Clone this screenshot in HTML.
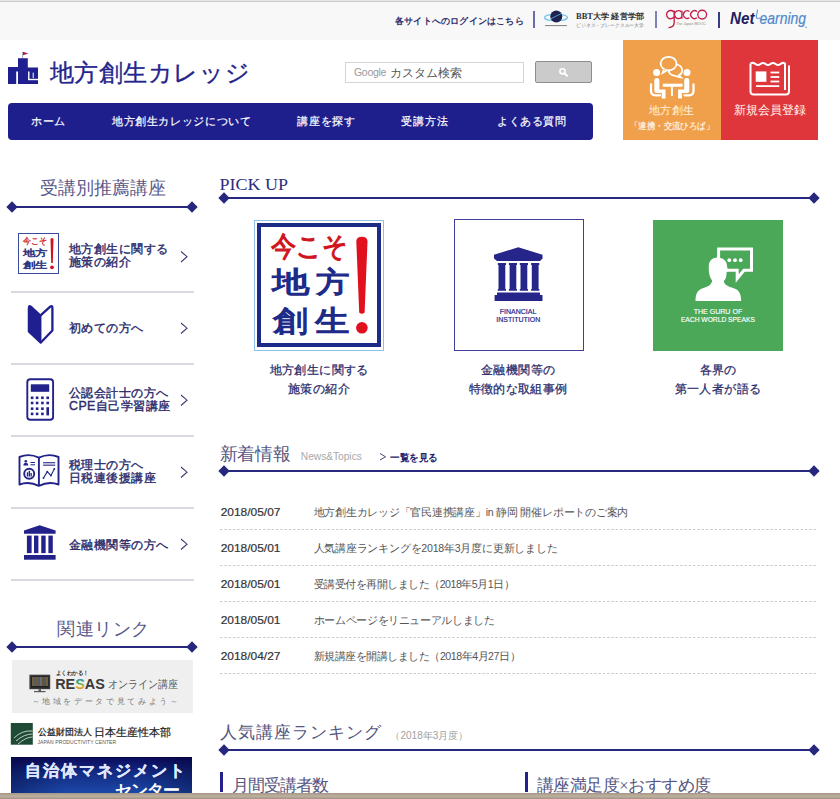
<!DOCTYPE html>
<html lang="ja"><head><meta charset="utf-8">
<style>
*{margin:0;padding:0;box-sizing:border-box}
html,body{width:840px;height:799px;overflow:hidden;background:#fff;font-family:"Liberation Sans",sans-serif;color:#1f1f6e}
.abs{position:absolute;white-space:nowrap}
svg{position:absolute;overflow:visible}
#top{position:absolute;left:0;top:0;width:840px;height:40px;background:#f8f8f8;border-top:1px solid #e6e6e6}
#top:before{content:"";position:absolute;left:0;top:0;width:840px;height:1px;background:#cbcbcb}
.login{position:absolute;left:395px;top:14px;font-size:9px;font-weight:bold;color:#2e2e6e;white-space:nowrap;letter-spacing:0.2px}
.vsep{position:absolute;width:2px;background:#6c6cab}
#nav{position:absolute;left:8px;top:102.8px;width:585.3px;height:37.3px;background:#1e1e8c;border-radius:4px}
#nav span{position:absolute;top:114px;color:#fff;font-size:11.4px;white-space:nowrap;-webkit-text-stroke:0.25px #fff}
.search{position:absolute;left:345px;top:62px;width:179px;height:21px;border:1px solid #d5d5d5;background:#fff}
.sbtn{position:absolute;left:535px;top:61px;width:57px;height:22px;border:1px solid #8e8e8e;border-radius:2px;background:#cbcbcb}
#orange{position:absolute;left:623px;top:40px;width:98px;height:100px;background:#f0a04a}
#red{position:absolute;left:721px;top:40px;width:97px;height:100px;background:#df363c}
.hd{position:absolute;font-family:"Liberation Serif",serif;color:#58588a;white-space:nowrap}
.dline{position:absolute;height:2px;background:#27277d}
.dline:before,.dline:after{content:"";position:absolute;top:-3px;width:8px;height:8px;background:#27277d;transform:rotate(45deg)}
.dline:before{left:-4px}.dline:after{right:-4px}
.sep{position:absolute;left:11px;width:183px;height:1.6px;background:#d9d9df}
.st{position:absolute;left:69px;font-size:12.4px;line-height:12.6px;letter-spacing:0.45px;color:#2c2c6c;white-space:nowrap;-webkit-text-stroke:0.4px #2c2c6c}
.pcap{position:absolute;top:360.5px;width:200px;text-align:center;font-size:12px;letter-spacing:0.35px;text-indent:0.35px;line-height:19px;color:#2a2a6a;-webkit-text-stroke:0.25px #2a2a6a}
.nd{position:absolute;left:221px;font-size:11px;font-weight:bold;color:#333}
.nx{position:absolute;left:313px;font-size:10.5px;color:#444;white-space:nowrap}
.ndash{position:absolute;left:220px;width:597px;height:0;border-top:1px dashed #cfcfcf}
</style></head><body>
<div id="top">
  <div class="login">各サイトへのログインはこちら</div>
</div>
<div class="vsep" style="left:533px;top:11px;height:17px"></div>
<div class="vsep" style="left:655px;top:11px;height:17px;background:#8080bb"></div>
<div class="vsep" style="left:718px;top:12px;height:16px;background:#3a3a80"></div>

<!-- BBT logo -->
<svg style="left:0;top:0" width="840" height="40">
  <ellipse cx="556" cy="17.5" rx="11.5" ry="3.2" fill="none" stroke="#74c4ec" stroke-width="1.3"/>
  <circle cx="556.3" cy="16.6" r="6" fill="#1b2450"/>
  <path d="M550.5 19 Q556 16 561.5 13.5" stroke="#74c4ec" stroke-width="0.7" fill="none"/>
  <rect x="545" y="25" width="22" height="1.1" fill="#8a8a8a"/>
  <text x="576" y="19" font-family="Liberation Serif" font-weight="bold" font-size="8.4" fill="#333" textLength="68" lengthAdjust="spacingAndGlyphs">BBT大学 経営学部</text>
  <text x="576" y="27" font-family="Liberation Sans" font-size="4.6" fill="#777" textLength="68" lengthAdjust="spacingAndGlyphs">ビジネス・ブレークスルー大学</text>
  <g fill="none" stroke="#c41e48" stroke-width="1.35">
    <path d="M674 12.2 A4.1 4.1 0 1 0 674 17"/>
    <path d="M674.2 10.6 V22.5 Q674.2 27.4 668.5 27.6"/>
    <path d="M681.7 12.2 A4 4 0 1 0 681.7 17"/>
    <path d="M681.9 10.7 V18.8"/>
    <path d="M689.4 11.5 A3.8 3.8 0 1 0 689.4 17.7"/>
    <path d="M697 11.5 A3.9 3.9 0 1 0 697 17.7"/>
    <circle cx="702.2" cy="14.6" r="4.4"/>
  </g>
  <text x="676" y="24.8" font-family="Liberation Sans" font-size="3.6" fill="#888" textLength="30" lengthAdjust="spacingAndGlyphs">The Japan MOOC</text>
  <text x="730" y="24.3" font-family="Liberation Sans" font-weight="bold" font-style="italic" font-size="16.2" fill="#1e2162" textLength="24.5" lengthAdjust="spacingAndGlyphs">Net</text>
  <path d="M757.5 9.5 L756.2 18.2 H760.5" fill="none" stroke="#5a8fd0" stroke-width="1"/>
  <text x="759.5" y="24.3" font-family="Liberation Sans" font-style="italic" font-size="16.5" fill="#4f88cc" stroke="#4f88cc" stroke-width="0.2" textLength="46.5" lengthAdjust="spacingAndGlyphs">earning</text>
  <circle cx="806" cy="27.2" r="0.7" fill="#4f88cc"/>
</svg>

<!-- logo -->
<svg style="left:0;top:0" width="300" height="100">
  <rect x="22.2" y="51.8" width="0.9" height="6.6" fill="#9a9ab8"/>
  <path d="M23 51.8 L28.3 53.5 L23 55.2 Z" fill="#a82044"/>
  <path d="M8 67 H18 V58.2 H27.8 V67.5 H38 V84 H18 V71.5 H16.2 V84 H8 Z" fill="#1f1f8f"/>
  <rect x="28.1" y="71.5" width="1.4" height="8.5" fill="#fff"/>
  <rect x="28.1" y="78.8" width="9.9" height="1.4" fill="#fff"/>
  <rect x="32.7" y="72.6" width="1" height="5.4" fill="#fff"/>
  <text x="49.5" y="81.3" style="font-family:'Liberation Sans',sans-serif" font-size="23.5" fill="#24248c" stroke="#24248c" stroke-width="0.35" textLength="200" lengthAdjust="spacing">地方創生カレッジ</text>
</svg>

<div class="search"></div>
<div class="abs" style="left:354px;top:66px;font-size:10.5px;color:#9a9a9a;letter-spacing:-0.3px">Google</div>
<div class="abs" style="left:390px;top:65.5px;font-size:11.6px;color:#555">カスタム検索</div>
<div class="sbtn"></div>
<svg style="left:0;top:0" width="840" height="100">
  <circle cx="562.5" cy="71.3" r="2.6" fill="none" stroke="#fff" stroke-width="1.6"/>
  <path d="M564.3 73.1 L567 75.8" stroke="#fff" stroke-width="2" stroke-linecap="round"/>
</svg>

<div id="orange"></div>
<div id="red"></div>
<!-- orange icon -->
<svg style="left:0;top:0" width="840" height="140">
  <g fill="none" stroke="#fff" stroke-width="1.75">
    <path d="M676 64.5 C683 65 684 73 679 75 L681 77.5 L675 75.8 C670 75.5 668 72 669.5 70" />
    <ellipse cx="668.6" cy="63.6" rx="8" ry="6.8" fill="#f0a04a"/>
    <path d="M664 69.6 L662.5 73 L667 70.6" fill="#f0a04a"/>
  </g>
  <g fill="#fff">
    <circle cx="656.6" cy="72.5" r="3.5"/>
    <circle cx="687" cy="72.5" r="3.5"/>
    <path d="M654.3 80 Q654.3 78 656.8 78 Q659.4 78 659.4 80 V89.6 H665.5 V98.4 H661.7 V93 H656.8 Q654.3 93 654.3 90.5 Z"/>
    <path d="M689.3 80 Q689.3 78 686.8 78 Q684.2 78 684.2 80 V89.6 H678.1 V98.4 H681.9 V93 H686.8 Q689.3 93 689.3 90.5 Z"/>
    <rect x="662.8" y="83.7" width="19.8" height="3.1"/>
    <rect x="671" y="86.5" width="1.9" height="9.5"/>
  </g>
  <g fill="none" stroke="#fff" stroke-width="2.3" stroke-linecap="round">
    <path d="M651 84.5 V91 Q651 95.3 655.5 95.3 H660"/>
    <path d="M693.5 84.5 V91 Q693.5 95.3 689 95.3 H684.5"/>
  </g>
</svg>
<div class="abs" style="left:648.5px;top:103px;font-size:11.3px;letter-spacing:0.5px;color:#fff4e6">地方創生</div>
<svg style="left:0;top:0" width="840" height="140"><text x="630" y="129.2" style="font-family:'Liberation Sans',sans-serif" font-size="8.8" fill="#fff4e6" stroke="#fff4e6" stroke-width="0.2" textLength="84" lengthAdjust="spacingAndGlyphs">「連携・交流ひろば」</text></svg>
<!-- red icon -->
<svg style="left:0;top:0" width="840" height="140">
  <g fill="none" stroke="#fff" stroke-width="2" stroke-linejoin="round">
    <path d="M750.5 63.5 Q753 62 755.5 64 Q758 66 760.5 64 Q763 62 765.5 64 Q768 66 770.5 64 Q773 62 775.5 64 Q778 66 780.5 64 Q783 62 785 63.5 V90"/>
    <path d="M750.5 63.5 V91.5 Q750.5 94.6 753.6 94.6 H786 Q789 94.6 789 91.5 V65.5"/>
  </g>
  <g fill="#fff">
    <rect x="755.7" y="71.4" width="10.7" height="10.4"/>
    <rect x="770.5" y="71.6" width="8.8" height="1.8"/>
    <rect x="770.5" y="76.1" width="8.8" height="1.8"/>
    <rect x="770.5" y="80.6" width="8.8" height="1.8"/>
    <rect x="756" y="85.2" width="23.3" height="1.8"/>
  </g>
</svg>
<div class="abs" style="left:734px;top:103px;font-size:11.7px;color:#fff4f0">新規会員登録</div>

<div id="nav"></div>
<span class="abs" style="left:31px;top:114px;color:#fff;font-size:11.2px;letter-spacing:0.6px;-webkit-text-stroke:0.2px #fff">ホーム</span>
<span class="abs" style="left:112px;top:114px;color:#fff;font-size:11.4px;letter-spacing:0.62px;-webkit-text-stroke:0.2px #fff">地方創生カレッジについて</span>
<span class="abs" style="left:297px;top:114px;color:#fff;font-size:11.4px;letter-spacing:0.8px;-webkit-text-stroke:0.2px #fff">講座を探す</span>
<span class="abs" style="left:401px;top:114px;color:#fff;font-size:11.4px;letter-spacing:0.95px;-webkit-text-stroke:0.2px #fff">受講方法</span>
<span class="abs" style="left:497px;top:114px;color:#fff;font-size:11.4px;letter-spacing:0.56px;-webkit-text-stroke:0.2px #fff">よくある質問</span>

<!-- SIDEBAR_START -->
<div class="hd" style="left:40px;top:176px;font-size:18px">受講別推薦講座</div>
<div class="dline" style="left:12px;top:205.5px;width:180px"></div>

<!-- item1 -->
<div class="abs" style="left:18px;top:232.5px;width:40.5px;height:41.5px;border:1.6px solid #3a4a9c;background:#fff"></div>
<svg style="left:0;top:0" width="210" height="799">
  <g style="font-family:'Liberation Sans',sans-serif">
  <text x="23.3" y="244.3" font-size="8.6" fill="#d0282c" stroke="#d0282c" stroke-width="0.35" textLength="23.8" lengthAdjust="spacingAndGlyphs">今こそ</text>
  <text x="22.8" y="255.8" font-size="9.2" fill="#28307e" stroke="#28307e" stroke-width="0.45" textLength="24.8" lengthAdjust="spacingAndGlyphs">地方</text>
  <text x="22.8" y="267.5" font-size="9.2" fill="#28307e" stroke="#28307e" stroke-width="0.45" textLength="24.8" lengthAdjust="spacingAndGlyphs">創生</text>
  </g>
</svg>
<svg style="left:0;top:0" width="210" height="799">
  <path d="M50.5 239 Q52 237.2 53.5 239 L52.8 263 H51.2 Z" fill="#d0141c"/>
  <circle cx="52" cy="267.3" r="1.9" fill="#d0141c"/>
</svg>
<div class="st" style="top:243px">地方創生に関する<br>施策の紹介</div>
<div class="sep" style="top:291px"></div>

<!-- item2 -->
<svg style="left:0;top:0" width="210" height="799">
  <path d="M28.6 308 Q28.6 304.6 31.2 306.6 L40.6 315.3 V343 L28.6 331.6 Z" fill="#1f1f8f" stroke="#1f1f8f" stroke-width="1.7" stroke-linejoin="round"/>
  <path d="M40.6 315.3 L50.2 306.7 Q52.4 305 52.4 308 V330.5 L40.6 342.8" fill="none" stroke="#1f1f8f" stroke-width="2.3" stroke-linejoin="round"/>
</svg>
<div class="st" style="top:321.5px">初めての方へ</div>
<div class="sep" style="top:363px"></div>

<!-- item3 calculator -->
<svg style="left:0;top:0" width="210" height="799">
  <rect x="27.3" y="379.3" width="25.8" height="40.4" rx="3" fill="none" stroke="#22228a" stroke-width="1.9"/>
  <rect x="30.8" y="384.3" width="18.4" height="7.5" fill="#22228a"/>
  <g fill="#22228a">
    <rect x="30.8" y="396.5" width="2.6" height="2.6"/><rect x="35.8" y="396.5" width="2.6" height="2.6"/><rect x="41.1" y="396.5" width="2.6" height="2.6"/><rect x="46.4" y="396.5" width="2.6" height="2.6"/>
    <rect x="30.8" y="401.7" width="2.6" height="2.6"/><rect x="35.8" y="401.7" width="2.6" height="2.6"/><rect x="41.1" y="401.7" width="2.6" height="2.6"/><rect x="46.4" y="401.7" width="2.6" height="2.6"/>
    <rect x="30.8" y="407.4" width="2.6" height="2.6"/><rect x="35.8" y="407.4" width="2.6" height="2.6"/><rect x="41.1" y="407.4" width="2.6" height="2.6"/>
    <rect x="30.8" y="412.6" width="2.6" height="2.6"/><rect x="35.8" y="412.6" width="2.6" height="2.6"/><rect x="41.1" y="412.6" width="2.6" height="2.6"/>
    <rect x="46.4" y="407.2" width="2.6" height="8.2"/>
  </g>
</svg>
<div class="st" style="top:387px">公認会計士の方へ<br>CPE自己学習講座</div>
<div class="sep" style="top:435px"></div>

<!-- item4 book -->
<svg style="left:0;top:0" width="210" height="799">
  <g fill="none" stroke="#22228a" stroke-width="1.9" stroke-linejoin="round">
    <path d="M38.9 457.6 Q29 453 19.5 457 V484.5 Q29 481 38.9 485.8 Q49 481 58.5 484.5 V457 Q49 453 38.9 457.6 Z"/>
    <path d="M38.9 457.6 V485.8"/>
    <circle cx="29.2" cy="473.8" r="5"/>
    <path d="M43.5 478 L47.3 471.6 L50.9 475.6 L54.3 469" stroke-width="1.1"/>
  </g>
  <g fill="#22228a">
    <circle cx="25.8" cy="461.3" r="1.3"/>
    <path d="M23.4 465.5 Q23.4 462.8 25.8 462.8 Q28.2 462.8 28.2 465.5 Z"/>
    <rect x="30.5" y="462" width="4.5" height="1"/><rect x="30.5" y="464.3" width="4.5" height="1"/>
    <rect x="43.1" y="462.2" width="12.1" height="1.1"/><rect x="43.1" y="464.6" width="12.1" height="1.1"/>
    <rect x="26.8" y="472.3" width="1.3" height="4.2"/><rect x="28.6" y="470.8" width="1.5" height="5.7"/><rect x="30.5" y="473" width="1.3" height="3.5"/>
    <circle cx="43.5" cy="478" r="0.9"/><circle cx="47.3" cy="471.6" r="0.9"/><circle cx="50.9" cy="475.6" r="0.9"/><circle cx="54.3" cy="469" r="0.9"/>
  </g>
</svg>
<div class="st" style="top:459px">税理士の方へ<br>日税連後援講座</div>
<div class="sep" style="top:507px"></div>

<!-- item5 bank -->
<svg style="left:0;top:0" width="210" height="799">
  <g fill="#22228a">
    <path d="M39.7 525.3 L55.6 530.6 V533.8 H24 V530.6 Z"/>
    <rect x="26.9" y="535.6" width="4.7" height="17.5"/>
    <rect x="34" y="535.6" width="4.4" height="17.5"/>
    <rect x="41.25" y="535.6" width="4.4" height="17.5"/>
    <rect x="48.4" y="535.6" width="4.4" height="17.5"/>
    <rect x="24" y="555" width="31.6" height="4.7"/>
  </g>
</svg>
<div class="st" style="top:539px">金融機関等の方へ</div>
<div class="sep" style="top:579px"></div>

<!-- arrows -->
<svg style="left:0;top:0" width="210" height="799">
  <g fill="none" stroke="#3b3b78" stroke-width="1.1">
    <path d="M181 251.5 L187 256.7 L181 262"/>
    <path d="M181 323 L187 328.2 L181 333.5"/>
    <path d="M181 395 L187 400.2 L181 405.5"/>
    <path d="M181 467 L187 472.2 L181 477.5"/>
    <path d="M181 539 L187 544.2 L181 549.5"/>
  </g>
</svg>

<div class="hd" style="left:57px;top:617px;font-size:18px;letter-spacing:0.5px">関連リンク</div>
<div class="dline" style="left:12px;top:646px;width:180px"></div>

<!-- RESAS -->
<div class="abs" style="left:11.5px;top:660px;width:181.5px;height:53px;background:#efefef"></div>
<svg style="left:0;top:0" width="210" height="799">
  <rect x="29.4" y="674.7" width="20.8" height="14.5" fill="#3a3a3a"/>
  <rect x="31" y="676.3" width="17.6" height="11.3" fill="#222"/>
  <g stroke-width="0.8">
    <path d="M33 677 V686" stroke="#e6c36a"/><path d="M35 677 V686" stroke="#b0b0b0"/><path d="M37 677 V686" stroke="#dcb860"/><path d="M39 677 V686" stroke="#9ad"/>
    <path d="M41 677 V686" stroke="#ddd"/><path d="M43 677 V686" stroke="#c9a050"/><path d="M45 677 V686" stroke="#aaa"/><path d="M47 677 V686" stroke="#e0c070"/>
  </g>
  <rect x="38.5" y="689.2" width="2.5" height="2" fill="#555"/>
  <rect x="34" y="691" width="11.5" height="1.2" fill="#555"/>
</svg>
<svg style="left:0;top:0" width="210" height="799">
  <defs><linearGradient id="sg" x1="0" y1="0" x2="0" y2="1"><stop offset="0" stop-color="#2f7fd0"/><stop offset="0.45" stop-color="#3aa860"/><stop offset="0.7" stop-color="#e8b830"/><stop offset="1" stop-color="#d83a3a"/></linearGradient></defs>
  <g style="font-family:'Liberation Sans',sans-serif">
    <text x="55.6" y="674.5" font-size="6.2" font-weight="bold" fill="#333" textLength="32.9" lengthAdjust="spacingAndGlyphs">よくわかる！</text>
    <text x="55.2" y="688.6" font-size="14.5" font-weight="bold" fill="#3a3a3a" textLength="49.6" lengthAdjust="spacingAndGlyphs">RE<tspan fill="url(#sg)">S</tspan>AS</text>
    <text x="107.5" y="688.2" font-size="11" fill="#5a5a5a" textLength="70.5" lengthAdjust="spacingAndGlyphs">オンライン講座</text>
    <text x="31.5" y="703.8" font-size="7.8" fill="#7a7a7a" textLength="146.5" lengthAdjust="spacing">～地域をデータで見てみよう～</text>
  </g>
</svg>

<!-- JPC -->
<svg style="left:0;top:0" width="210" height="799">
  <rect x="10.8" y="723" width="22" height="21.7" fill="#1f4a36"/>
  <g fill="none" stroke="#e8efe8" stroke-width="0.8">
    <path d="M14 738 Q22 730 32.5 731"/>
    <path d="M16 741 Q24 734 32.5 734"/>
    <path d="M18 744 Q26 737 32.5 737"/>
  </g>
</svg>
<div class="abs" style="left:37.5px;top:727px;font-size:8.8px;font-weight:bold;color:#333">公益財団法人</div>
<div class="abs" style="left:94px;top:725px;font-size:11px;color:#222;-webkit-text-stroke:0.2px #222">日本生産性本部</div>
<div class="abs" style="left:37.5px;top:739px;font-size:5px;color:#555;letter-spacing:0.1px">JAPAN PRODUCTIVITY CENTER</div>

<!-- 自治体マネジメントセンター -->
<div class="abs" style="left:10.8px;top:756.8px;width:181.7px;height:36px;background:linear-gradient(90deg,rgba(0,0,40,0.35) 0%,rgba(0,0,40,0) 30%,rgba(0,0,40,0) 70%,rgba(0,0,40,0.35) 100%),linear-gradient(180deg,#0c0c5e 0%,#122a82 40%,#1c48a8 100%);border-top:1px solid #050540"></div>
<svg style="left:0;top:0" width="210" height="799"><text x="25" y="776.3" style="font-family:'Liberation Sans',sans-serif" font-size="16" font-weight="bold" fill="#fff" stroke="#dde4ff" stroke-width="0.3" textLength="160" lengthAdjust="spacing">自治体マネジメント</text></svg>
<svg style="left:0;top:0" width="210" height="799"><text x="114.8" y="796" style="font-family:'Liberation Sans',sans-serif" font-size="16.5" font-weight="bold" fill="#fff" textLength="65.5" lengthAdjust="spacing">センター</text></svg>

<!-- SIDEBAR_END -->

<!-- MAIN_START -->
<svg style="left:0;top:0" width="840" height="799">
  <g style="font-family:'Liberation Serif',serif">
    <text x="219.5" y="189.5" font-size="16.5" fill="#2e2e7e" textLength="68.5" lengthAdjust="spacingAndGlyphs">PICK UP</text>
  </g>
</svg>
<div class="dline" style="left:224px;top:197px;width:590px"></div>

<!-- pick 1 -->
<div class="abs" style="left:254.3px;top:220px;width:129.3px;height:131px;border:1px solid #8fc0e8;background:#fff"></div>
<div class="abs" style="left:257px;top:223.2px;width:124px;height:124.3px;border:4.3px solid #1c2a88"></div>
<svg style="left:0;top:0" width="840" height="799">
  <g style="font-family:'Liberation Sans',sans-serif">
    <text x="271" y="256" font-size="27.5" fill="#d0141c" stroke="#d0141c" stroke-width="1.1" textLength="77" lengthAdjust="spacingAndGlyphs">今こそ</text>
    <text x="272" y="292" font-size="28.5" fill="#1c2a88" stroke="#1c2a88" stroke-width="1.2" textLength="37.5" lengthAdjust="spacingAndGlyphs">地</text>
    <text x="315.5" y="292" font-size="28.5" fill="#1c2a88" stroke="#1c2a88" stroke-width="1.2" textLength="33.5" lengthAdjust="spacingAndGlyphs">方</text>
    <text x="272.5" y="331" font-size="29" fill="#1c2a88" stroke="#1c2a88" stroke-width="1.2" textLength="35" lengthAdjust="spacingAndGlyphs">創</text>
    <text x="314.5" y="331" font-size="29" fill="#1c2a88" stroke="#1c2a88" stroke-width="1.2" textLength="34.5" lengthAdjust="spacingAndGlyphs">生</text>
  </g>
  <path d="M356.3 241.5 Q356.3 236.7 361.9 236.7 Q367.5 236.7 367.5 241.5 L364.6 312.5 Q361.9 315 359.2 312.5 Z" fill="#e0101c"/>
  <circle cx="361.9" cy="327.8" r="5.8" fill="#e0101c"/>
</svg>

<!-- pick 2 -->
<div class="abs" style="left:453.7px;top:219.4px;width:130px;height:132px;border:1.5px solid #40409a;background:#fff"></div>
<svg style="left:0;top:0" width="840" height="799">
  <g fill="#26268a">
    <path d="M518.3 247.3 L542.5 254.7 V258.5 L540 260.9 H497 L494 258.5 V254.7 Z"/>
    <path d="M497.8 263.1 H506 V265 H505.3 V289 H506 V290.7 H497.8 V289 H498.5 V265 H497.8 Z"/>
    <path d="M508.9 263.1 H517 V265 H516.3 V289 H517 V290.7 H508.9 V289 H509.6 V265 H508.9 Z"/>
    <path d="M519.8 263.1 H528 V265 H527.3 V289 H528 V290.7 H519.8 V289 H520.5 V265 H519.8 Z"/>
    <path d="M531.1 263.1 H539.3 V265 H538.6 V289 H539.3 V290.7 H531.1 V289 H531.8 V265 H531.1 Z"/>
    <path d="M497 292.4 H540 V295 H542.5 V300.9 H494.6 V295 H497 Z"/>
  </g>
  <g style="font-family:'Liberation Sans',sans-serif" fill="#2a2a8a" stroke="#2a2a8a" stroke-width="0.2">
    <text x="499.7" y="313.8" font-size="6.9" textLength="36.6" lengthAdjust="spacingAndGlyphs">FINANCIAL</text>
    <text x="496.3" y="321.7" font-size="6.9" textLength="43.9" lengthAdjust="spacingAndGlyphs">INSTITUTION</text>
  </g>
</svg>

<!-- pick 3 -->
<div class="abs" style="left:653px;top:220px;width:130px;height:131px;background:#4aa858"></div>
<svg style="left:0;top:0" width="840" height="799">
  <path d="M718.6 249 H751.5 V270.3 H744 L737.2 278.5 V270.3 H718.6 Z" fill="#4aa858" stroke="#fff" stroke-width="3" stroke-linejoin="miter"/>
  <g fill="#fff"><circle cx="729.3" cy="260.2" r="1.9"/><circle cx="735" cy="260.2" r="1.9"/><circle cx="740.7" cy="260.2" r="1.9"/></g>
  <path fill="#fff" d="M695.5 301 C695.5 292.5 698.5 289.5 704 287.8 C709 286.3 711.5 284.5 712.2 280.5 C709.5 277.5 708.6 272 708.8 266 C709 260.5 712.5 257.5 717.5 257.5 C723 257.5 727 261 727 266 L728 271 L726.6 272.3 C726.6 277 725.5 280 723.8 281 C724.3 284.3 727 286.3 732.5 287.8 C738 289.3 741.2 292.5 741.2 301 Z"/>
  <g style="font-family:'Liberation Sans',sans-serif" fill="#fff" stroke="#fff" stroke-width="0.15">
    <text x="693.7" y="314.2" font-size="6.9" textLength="48.5" lengthAdjust="spacingAndGlyphs">THE GURU OF</text>
    <text x="680.9" y="322.2" font-size="6.9" textLength="74" lengthAdjust="spacingAndGlyphs">EACH WORLD SPEAKS</text>
  </g>
</svg>

<div class="pcap" style="left:219px">地方創生に関する<br>施策の紹介</div>
<div class="pcap" style="left:418px">金融機関等の<br>特徴的な取組事例</div>
<div class="pcap" style="left:618px">各界の<br>第一人者が語る</div>

<svg style="left:0;top:0" width="840" height="799">
  <text x="219.5" y="459.5" style="font-family:'Liberation Serif',serif" font-size="18" fill="#55557f" textLength="71" lengthAdjust="spacingAndGlyphs">新着情報</text>
  <text x="300.8" y="460.4" style="font-family:'Liberation Sans',sans-serif" font-size="11" fill="#a8a8a8" textLength="61" lengthAdjust="spacingAndGlyphs">News&amp;Topics</text>
  <path d="M380 453.5 L385.5 456.8 L380 460" fill="none" stroke="#333366" stroke-width="0.9"/>
  <text x="390" y="460.5" style="font-family:'Liberation Sans',sans-serif" font-size="10" font-weight="bold" fill="#24246e" textLength="47.7" lengthAdjust="spacingAndGlyphs">一覧を見る</text>
</svg>
<div class="dline" style="left:224px;top:470px;width:590px"></div>

<svg style="left:0;top:0" width="840" height="799">
  <g style="font-family:'Liberation Sans',sans-serif" font-size="11.8" fill="#333" stroke="#333" stroke-width="0.2">
    <text x="220.7" y="516.2" textLength="59.8" lengthAdjust="spacingAndGlyphs">2018/05/07</text>
    <text x="220.7" y="552.2" textLength="59.8" lengthAdjust="spacingAndGlyphs">2018/05/01</text>
    <text x="220.7" y="588.2" textLength="59.8" lengthAdjust="spacingAndGlyphs">2018/05/01</text>
    <text x="220.7" y="624.2" textLength="59.8" lengthAdjust="spacingAndGlyphs">2018/05/01</text>
    <text x="220.7" y="660.2" textLength="59.8" lengthAdjust="spacingAndGlyphs">2018/04/27</text>
  </g>
  <g style="font-family:'Liberation Sans',sans-serif" font-size="10.6" fill="#555">
    <text x="313.6" y="515.8" textLength="314.7" lengthAdjust="spacing">地方創生カレッジ「官民連携講座」in 静岡 開催レポートのご案内</text>
    <text x="313.6" y="551.8" textLength="244" lengthAdjust="spacing">人気講座ランキングを2018年3月度に更新しました</text>
    <text x="313.6" y="587.8" textLength="201.1" lengthAdjust="spacing">受講受付を再開しました（2018年5月1日）</text>
    <text x="313.6" y="623.8" textLength="181.4" lengthAdjust="spacing">ホームページをリニューアルしました</text>
    <text x="313.6" y="659.8" textLength="206.9" lengthAdjust="spacing">新規講座を開講しました（2018年4月27日）</text>
  </g>
  <g stroke="#cccccc" stroke-width="1" stroke-dasharray="2.5 1.8">
    <path d="M220 529.5 H817"/><path d="M220 565.5 H817"/><path d="M220 601.5 H817"/><path d="M220 637.5 H817"/><path d="M220 673.5 H817"/>
  </g>
</svg>

<svg style="left:0;top:0" width="840" height="799">
  <g style="font-family:'Liberation Serif',serif" fill="#55557f">
    <text x="220.3" y="738.1" font-size="17.2" textLength="160.4" lengthAdjust="spacing">人気講座ランキング</text>
    <text x="232.4" y="790.9" font-size="16.5" textLength="96.6" lengthAdjust="spacing">月間受講者数</text>
    <text x="537" y="790.9" font-size="16.5" textLength="174" lengthAdjust="spacing">講座満足度×おすすめ度</text>
  </g>
  <text x="390.4" y="739" style="font-family:'Liberation Sans',sans-serif" font-size="10" fill="#a0a0a0" textLength="78" lengthAdjust="spacing">（2018年3月度）</text>
</svg>
<div class="dline" style="left:224px;top:749px;width:590px"></div>
<div class="abs" style="left:219.8px;top:772.2px;width:3px;height:20px;background:#22228a"></div>
<div class="abs" style="left:524.7px;top:772.4px;width:3.2px;height:20px;background:#22228a"></div>
<!-- MAIN_END -->

<div class="abs" style="left:0;top:792.7px;width:840px;height:6.3px;background:linear-gradient(180deg,#a39787 0%,#b9ab99 40%,#bcae9c 60%,#9f9383 100%)"></div>
</body></html>
